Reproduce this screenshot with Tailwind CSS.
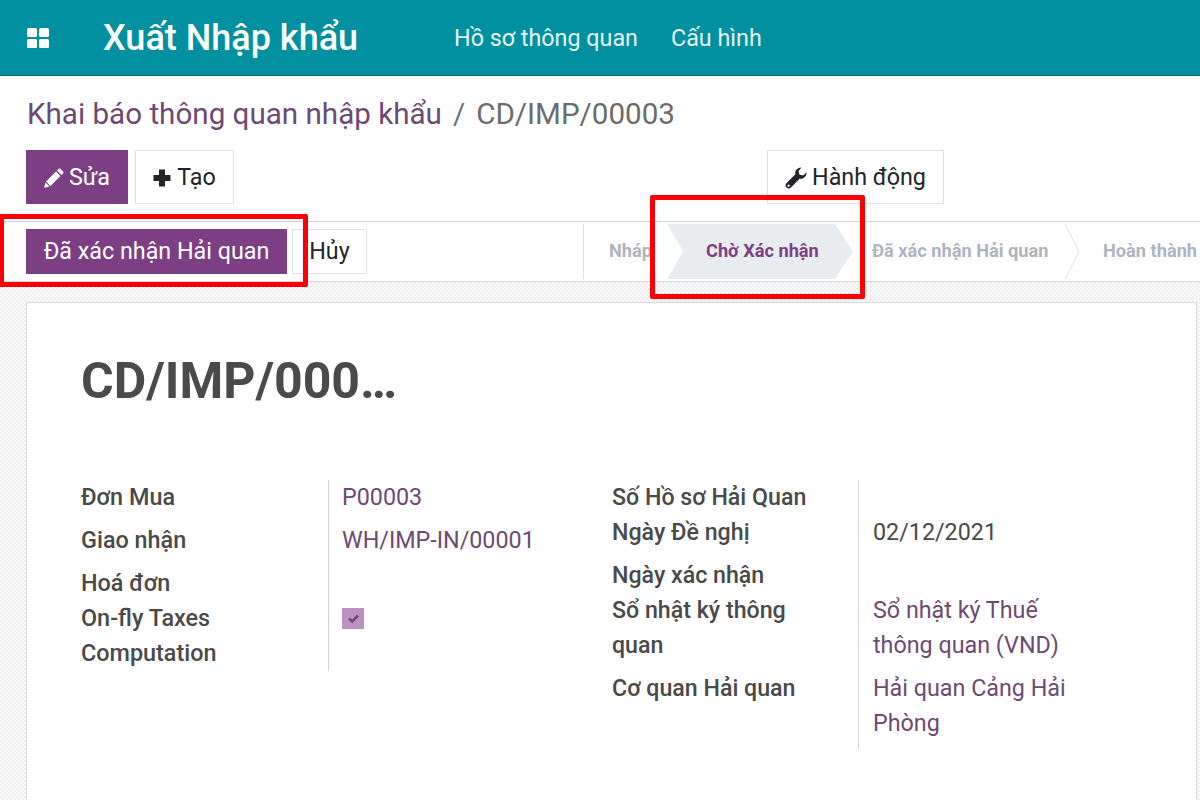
<!DOCTYPE html>
<html lang="vi">
<head>
  <meta charset="UTF-8" />
  <title>Khai báo thông quan nhập khẩu</title>
  <script src="https://cdn.jsdelivr.net/npm/@tailwindcss/browser@4"></script>
</head>
<body class="relative w-[1200px] h-[800px] overflow-hidden bg-white font-['Roboto',sans-serif] text-[#212529]">

  <!-- Thanh menu -->
  <header class="h-[76px] bg-[#00909f] border-b border-[#04656f] flex items-center text-white">
    <svg class="ml-[27px] w-[22px] h-[22px]" viewBox="0 0 22 22" fill="#fff">
      <rect x="0" y="1" width="10" height="9" rx="1.5"/>
      <rect x="12" y="1" width="10" height="9" rx="1.5"/>
      <rect x="0" y="12" width="10" height="9" rx="1.5"/>
      <rect x="12" y="12" width="10" height="9" rx="1.5"/>
    </svg>
    <div class="ml-[54px] pt-[1px] text-[36px] font-medium">Xuất Nhập khẩu</div>
    <nav class="ml-[96px] pt-[1px] flex gap-[33px] text-[23.3px] text-[#e6f4f5]">
      <span>Hồ sơ thông quan</span>
      <span>Cấu hình</span>
    </nav>
  </header>

  <!-- Breadcrumb -->
  <div class="h-[74px] pl-[27px] pt-[2px] flex items-center text-[29.6px]">
    <span class="text-[#6d4a72]">Khai báo thông quan nhập khẩu</span>
    <span class="mx-[11px] text-[#6c757d]">/</span>
    <span class="text-[#6c6c6c]">CD/IMP/00003</span>
  </div>

  <!-- Nút lệnh -->
  <div class="h-[71px] pl-[26px] flex items-start text-[23.3px]">
    <button class="h-[54px] w-[102px] pt-[1px] bg-[#7c3f83] text-white flex items-center justify-center gap-[5px]">
      <svg class="w-[20px] h-[20px]" viewBox="0 0 20 20" fill="#fff"><path d="M14.6 .9 C15.2 .3 16 .3 16.6 .9 L19.1 3.4 C19.7 4 19.7 4.8 19.1 5.4 L17.5 7 L13 2.5 Z M12 3.5 L16.5 8 L6.5 18 L2 13.5 Z M1.5 14.5 L5.5 18.5 L.2 19.8 Z"/></svg>
      Sửa
    </button>
    <button class="ml-[7px] h-[54px] w-[99px] pt-[1px] border border-[#e2e2e2] flex items-center justify-center gap-[6px]">
      <svg class="w-[18px] h-[18px]" viewBox="0 0 18 18" fill="#212529"><path d="M6 0.5 H12 V6 H17.5 V12 H12 V17.5 H6 V12 H0.5 V6 H6 Z"/></svg>
      Tạo
    </button>
    <button class="ml-[533px] h-[54px] w-[177px] pt-[1px] border border-[#e2e2e2] flex items-center justify-center gap-[5px]">
      <svg class="w-[22px] h-[22px]" viewBox="0 0 22 22" fill="#212529" fill-rule="evenodd"><path d="M21.5 5.5 C21.8 9 18.5 12.6 14.8 11.6 L6 20.4 C4.6 21.8 2.8 21.8 1.5 20.5 C.2 19.2 .2 17.4 1.6 16 L10.4 7.2 C9.4 3.5 13 .2 16.5 .5 L13.6 4 L14.4 7.6 L18 8.4 Z M3.6 17.4 A1.2 1.2 0 1 0 3.61 17.4 Z"/></svg>
      Hành động
    </button>
  </div>

  <!-- Thanh trạng thái -->
  <div class="h-[61px] border-y border-[#d5d5d5] pl-[26px] flex items-center text-[23.3px]">
    <button class="h-[45px] w-[261px] bg-[#7c3f83] text-white">Đã xác nhận Hải quan</button>
    <button class="ml-[5px] h-[45px] w-[75px] border border-[#e2e2e2]">Hủy</button>
    <div class="relative ml-[216px] h-[55px] flex-1 border-l border-[#e2e2e2] text-[18.2px] font-bold text-[#adb5bd]">
      <span class="absolute left-[25px] top-[13px]">Nháp</span>
      <div class="absolute left-[83px] top-0 w-[186px] h-[55px] bg-[#e9ecef] [clip-path:polygon(0_0,168px_0,100%_50%,168px_100%,0_100%,16px_50%)]"></div>
      <span class="absolute left-[122px] top-[13px] text-[#7c3f83]">Chờ Xác nhận</span>
      <span class="absolute left-[288px] top-[13px]">Đã xác nhận Hải quan</span>
      <svg class="absolute left-[480px] top-0" width="20" height="55" viewBox="0 0 20 55" fill="none" stroke="#dee2e6"><path d="M1 0 L15 27.5 L1 55"/></svg>
      <span class="absolute left-[519px] top-[13px] whitespace-nowrap">Hoàn thành</span>
    </div>
  </div>

  <!-- Vùng nội dung -->
  <div class="h-[520px] bg-[#f4f4f4] bg-[repeating-conic-gradient(#eeeeee_0_25%,#fafafa_0_50%)] bg-[length:4px_4px] pt-[20px] pl-[26px] pr-[3px]">
    <div class="h-[520px] bg-white border border-[#d9d9d9] pl-[54px] pr-[20px]">
      <h1 class="pt-[46px] h-[177px] text-[50px] leading-[64px] font-bold text-[#4a4a4a]">CD/IMP/000…</h1>

      <div class="flex text-[23.3px]">
        <div class="w-[531px] flex">
          <div class="w-[247px] font-medium text-[23.4px] text-[#4a4a4a]">
            <div class="h-[43px] leading-[35px]">Đơn Mua</div>
            <div class="h-[43px] leading-[35px]">Giao nhận</div>
            <div class="h-[35px] leading-[35px]">Hoá đơn</div>
            <div class="h-[70px] leading-[35px]">On-fly Taxes<br>Computation</div>
          </div>
          <div class="w-[284px] h-[191px] border-l border-[#d5d5d5] pl-[13px] text-[#6d4a72]">
            <div class="h-[43px] leading-[35px]">P00003</div>
            <div class="h-[43px] leading-[35px]">WH/IMP-IN/00001</div>
            <div class="h-[42px]"></div>
            <div class="w-[22px] h-[21px] bg-[#bb92c0] flex items-center justify-center">
              <svg class="w-[13px] h-[13px]" viewBox="0 0 13 13" fill="none" stroke="#7c3f83" stroke-width="2.6"><path d="M2 6.5 L5.2 9.5 L11 3.5"/></svg>
            </div>
          </div>
        </div>
        <div class="flex">
          <div class="w-[246px] font-medium text-[23.2px] text-[#4a4a4a]">
            <div class="h-[35px] leading-[35px]">Số Hồ sơ Hải Quan</div>
            <div class="h-[43px] leading-[35px]">Ngày Đề nghị</div>
            <div class="h-[35px] leading-[35px]">Ngày xác nhận</div>
            <div class="h-[78px] leading-[35px]">Sổ nhật ký thông<br>quan</div>
            <div class="h-[35px] leading-[35px]">Cơ quan Hải quan</div>
          </div>
          <div class="w-[260px] h-[269px] border-l border-[#d5d5d5] pl-[14px] text-[#4a4a4a]">
            <div class="h-[35px]"></div>
            <div class="h-[43px] leading-[35px]">02/12/2021</div>
            <div class="h-[35px]"></div>
            <div class="h-[78px] leading-[35px] text-[#6d4a72]">Sổ nhật ký Thuế<br>thông quan (VND)</div>
            <div class="leading-[35px] text-[#6d4a72]">Hải quan Cảng Hải<br>Phòng</div>
          </div>
        </div>
      </div>
    </div>
  </div>

  <!-- Khung đỏ chú thích -->
  <div class="absolute left-[-1px] top-[214px] w-[309px] h-[73px] border-[5px] border-[#fb0007] rounded-[2px]"></div>
  <div class="absolute left-[650px] top-[195px] w-[215px] h-[104px] border-[5px] border-[#fb0007] rounded-[2px]"></div>
</body>
</html>
